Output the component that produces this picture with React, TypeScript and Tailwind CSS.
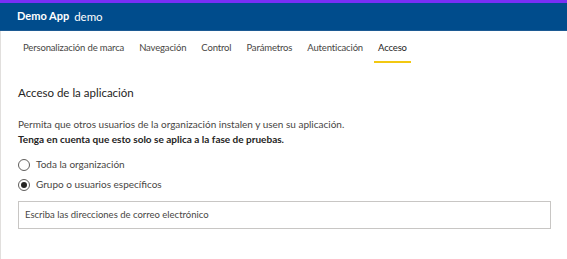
const tabs = [
  "Personalización de marca",
  "Navegación",
  "Control",
  "Parámetros",
  "Autenticación",
  "Acceso",
];

const App = () => {
  return (
    <div className="w-[567px] h-[259px] bg-white overflow-hidden text-[#323130]" style={{ fontFamily: 'Lato, "Noto Sans", sans-serif' }}>
      <div className="h-[3px] bg-[#7a2ff5]" />
      <div className="h-[28px] bg-[#004c8c] flex items-center px-[17px] gap-[5px] border-b border-[#1c5a93]">
        <span className="text-white font-bold text-[11px]">Demo App</span>
        <span className="text-white text-[11.5px]">demo</span>
      </div>
      <div className="border-l border-[#e1dfdd] h-[228px]">
        <div className="flex pl-[22px] gap-[15px] pt-[9px]">
          {tabs.map((t) => (
            <div key={t} className="flex flex-col">
              <span className={`text-[9.5px] tracking-[-0.15px] leading-[16px] ${t === "Acceso" ? "text-[#252423]" : "text-[#484644]"}`}>{t}</span>
              <div className={`mt-[5px] h-[2px] mx-[-4px] ${t === "Acceso" ? "bg-[#f2c811]" : "bg-transparent"}`} />
            </div>
          ))}
        </div>
        <div className="pl-[17px] pr-[17px]">
          <h2 className="text-[11.5px] mt-[22px] leading-[16px] text-[#252423]">Acceso de la aplicación</h2>
          <p className="text-[10px] mt-[16px] leading-[15px] text-[#484644]">
            Permita que otros usuarios de la organización instalen y usen su aplicación.
          </p>
          <p className="text-[10px] leading-[15px] font-bold text-[#252423]">
            Tenga en cuenta que esto solo se aplica a la fase de pruebas.
          </p>
          <div className="mt-[11px] flex flex-col gap-[7px]">
            <label className="flex items-center gap-[6px]">
              <span className="w-[12px] h-[12px] rounded-full border border-[#605e5c] bg-white" />
              <span className="text-[10px] leading-[13px] text-[#484644]">Toda la organización</span>
            </label>
            <label className="flex items-center gap-[6px]">
              <span className="w-[12px] h-[12px] rounded-full border border-[#605e5c] bg-white flex items-center justify-center">
                <span className="w-[6px] h-[6px] rounded-full bg-[#252423]" />
              </span>
              <span className="text-[10px] leading-[13px] text-[#484644]">Grupo o usuarios específicos</span>
            </label>
          </div>
          <div className="mt-[10px] w-[533px] h-[28px] border border-[#c8c6c4] flex items-center px-[6px]">
            <span className="text-[9.5px] text-[#484644]">Escriba las direcciones de correo electrónico</span>
          </div>
        </div>
      </div>
    </div>
  );
};

export default App;
